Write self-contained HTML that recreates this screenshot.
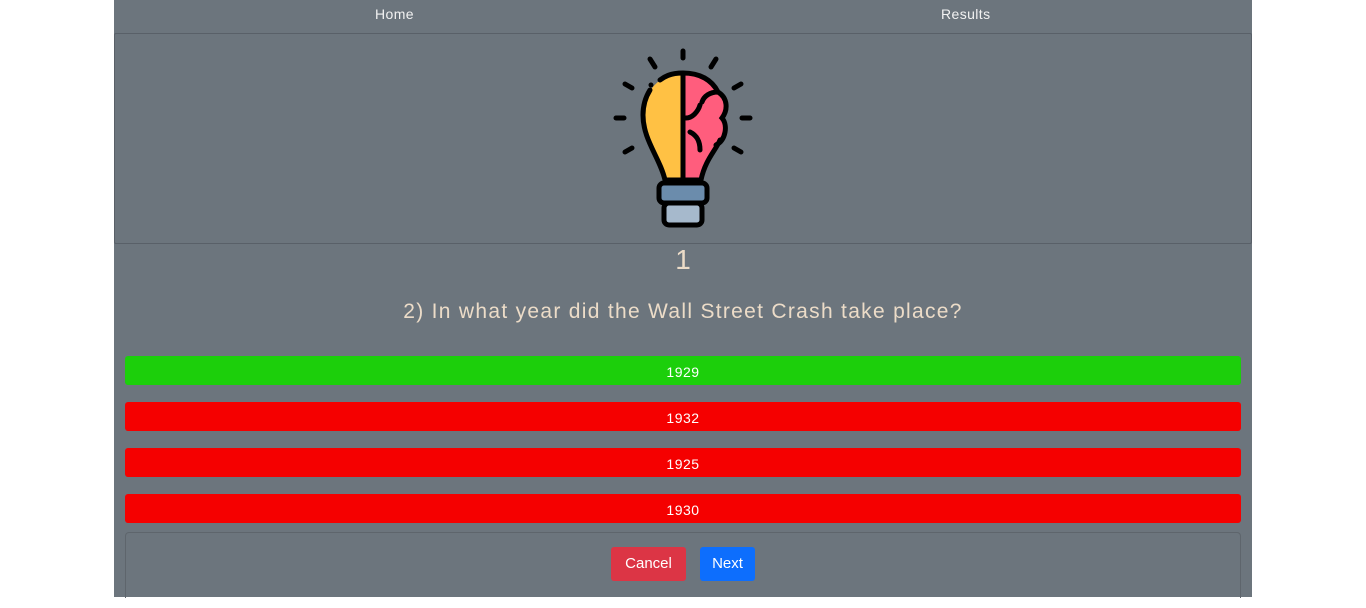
<!DOCTYPE html>
<html><head><meta charset="utf-8"><style>
body{margin:0;background:#fff;font-family:"Liberation Sans",sans-serif;}
.wrap{position:absolute;left:114px;top:0;width:1138px;height:597px;background:#6c757d;}
.nav{height:33px;position:relative;color:#f2f2f2;font-size:14px;letter-spacing:0.4px;}
.nav span{position:absolute;top:6px;}
.img{position:absolute;left:0;top:33px;width:1136px;height:209px;border:1px solid #596068;border-radius:2px;}
.num{position:absolute;top:244px;width:100%;text-align:center;color:#ecdcc8;font-size:28px;font-weight:300;}
.q{position:absolute;top:300px;width:100%;text-align:center;color:#ecdcc8;font-size:21px;letter-spacing:1.3px;}
.ans{position:absolute;left:11px;width:1116px;height:29px;border-radius:3px;color:#fff;font-size:14px;text-align:center;line-height:33px;letter-spacing:0.5px;}
.box{position:absolute;left:11px;top:532px;width:1114px;height:65px;border:1px solid #5e656c;border-bottom:none;border-radius:4px 4px 0 0;}
.btn{position:absolute;top:547px;height:34px;line-height:33px;color:#fff;font-size:15px;border-radius:3px;text-align:center;}
</style></head><body>
<div class="wrap">
<div class="nav"><span style="left:261px">Home</span><span style="left:827px">Results</span></div>
<div class="img"></div>
<svg style="position:absolute;left:0;top:0" width="1138" height="240" viewBox="114 0 1138 240">
<g stroke="#000" stroke-width="5" stroke-linecap="round" fill="none">
<line x1="683" y1="51" x2="683" y2="58"/>
<line x1="650" y1="59" x2="655" y2="67"/><line x1="716" y1="59" x2="711" y2="67"/>
<line x1="625" y1="84" x2="632" y2="88"/><line x1="741" y1="84" x2="734" y2="88"/>
<line x1="616" y1="118" x2="624" y2="118"/><line x1="742" y1="118" x2="750" y2="118"/>
<line x1="625" y1="152" x2="632" y2="148"/><line x1="741" y1="152" x2="734" y2="148"/>
</g>
<path d="M683 73 C660 73 643 92 643 115 C643 140 660 158 665 178 L683 178 Z" fill="#ffc144"/>
<path d="M683 73 C700 73 712 80 718 92 C728 98 728 110 722 118 C728 125 726 140 716 145 C712 160 703 168 700 178 L683 178 Z" fill="#ff5d7d"/>
<path d="M650 90 C645 98 643 106 643 115 C643 140 660 158 665 180 L701 180 C705 160 716 150 720 140 M683 73 C700 73 712 80 718 92 C728 98 728 110 722 118 C728 125 726 140 716 145 M683 73 C670 73 664 77 660 80 M683 73 L683 180 M686 118 C692 118 698 112 700 105 M700 150 C700 140 696 135 690 132 M718 92 C710 92 704 96 702 102" stroke="#000" stroke-width="5" fill="none" stroke-linecap="round"/>
<circle cx="651" cy="85" r="2.5" fill="#000"/>
<rect x="659" y="183" width="48" height="20" rx="5" fill="#6b8cac" stroke="#000" stroke-width="5"/>
<rect x="664" y="203" width="38" height="22" rx="5" fill="#a6b9cc" stroke="#000" stroke-width="5"/>
</svg>
<div class="num">1</div>
<div class="q">2) In what year did the Wall Street Crash take place?</div>
<div class="ans" style="top:356px;background:#1ccf0b">1929</div>
<div class="ans" style="top:402px;background:#f50000">1932</div>
<div class="ans" style="top:448px;background:#f50000">1925</div>
<div class="ans" style="top:494px;background:#f50000">1930</div>
<div class="box"></div>
<div class="btn" style="left:497px;width:75px;background:#dc3545">Cancel</div>
<div class="btn" style="left:586px;width:55px;background:#0d6efd">Next</div>
</div>
</body></html>
